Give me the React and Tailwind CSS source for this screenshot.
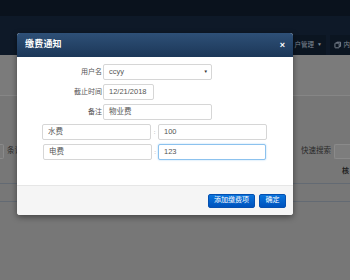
import React from "react";

const font = { fontFamily: '"Liberation Sans", "Noto Sans CJK SC", sans-serif' };

function Field({ w, children, focus, extra = "" }) {
  return (
    <div
      className={`h-[16px] rounded-[2px] border bg-white flex items-center pl-[5px] text-[7.5px] text-[#555] ${
        focus ? "border-[#8cc2ee] shadow-[0_0_2px_#a9d3f5]" : "border-[#d6d6d6]"
      } ${extra}`}
      style={{ width: w }}
    >
      {children}
    </div>
  );
}

export default function App() {
  return (
    <div className="relative w-[350px] h-[280px] overflow-hidden bg-[#777777]" style={font}>
      {/* underlying page (dimmed) */}
      <div className="h-[16px] bg-[#0a121d]" />
      <div className="h-[39px] bg-[#0e1928] flex items-end justify-end">
        <div className="h-[20px] w-[36px] bg-[#0b1521] flex items-center justify-end pr-[4px] gap-[3px] text-[6.5px] text-[#7f8893]">
          <span>户管理</span>
          <span className="text-[5px]">▼</span>
        </div>
        <div className="w-[4px]" />
        <div className="h-[20px] w-[20px] bg-[#0b1521] flex items-center gap-[2px] pl-[4px] text-[6.5px] text-[#7f8893]">
          <svg width="8" height="8" viewBox="0 0 8 8" fill="none" stroke="#7f8893" strokeWidth="1">
            <rect x="1" y="2" width="4.5" height="5" rx="0.5" />
            <path d="M3 2 V1 H7 V5.5 H5.5" />
          </svg>
          <span>内</span>
        </div>
      </div>
      <div className="h-[41px] bg-[#7b7b7b] border-b border-[#868686]" />
      <div className="h-[47px]" />
      <div className="flex items-center justify-between h-[16px]">
        <div className="flex items-center gap-[3px]">
          <div className="w-[4px] h-[15px] border border-[#8a8a8a] border-l-0 rounded-r-[2px] bg-[#7a7a7a]" />
          <span className="text-[7.5px] text-[#2a2a2a]">条记</span>
        </div>
        <div className="flex items-center gap-[3px]">
          <span className="text-[7.5px] text-[#2a2a2a]">快速搜索</span>
          <div className="w-[16px] h-[15px] border border-[#8a8a8a] border-r-0 rounded-l-[2px] bg-[#7d7d7d]" />
        </div>
      </div>
      <div className="flex justify-end h-[24px] items-center pr-[1px]">
        <span className="text-[7px] font-bold text-[#222]">核</span>
      </div>
      <div className="border-t border-[#636a73] h-[18px]" />
      <div className="border-t border-[#636a73]" />

      {/* modal */}
      <div className="absolute left-[17px] top-[33px] w-[276px] rounded-[3px] overflow-hidden bg-white shadow-[0_2px_6px_rgba(0,0,0,0.45)]">
        <div className="h-[24px] bg-gradient-to-b from-[#2e5077] to-[#1c3758] flex items-center justify-between pl-[8px] pr-[8px]">
          <span className="text-[9px] font-bold text-white tracking-[0.2px]">缴费通知</span>
          <span className="text-[9px] font-bold text-white leading-none">×</span>
        </div>
        <div className="h-[128px] pt-[7px] flex flex-col gap-[4px]">
          <div className="flex items-center">
            <div className="w-[86px] pr-[1px] text-right text-[7px] text-[#555]">用户名</div>
            <Field w={109}>
              <span className="flex-1">ccyy</span>
              <span className="text-[4.5px] text-[#333] mr-[3px]">▼</span>
            </Field>
          </div>
          <div className="flex items-center">
            <div className="w-[86px] pr-[1px] text-right text-[7px] text-[#555]">截止时间</div>
            <Field w={51}>12/21/2018</Field>
          </div>
          <div className="flex items-center">
            <div className="w-[86px] pr-[1px] text-right text-[7px] text-[#555]">备注</div>
            <Field w={109}>物业费</Field>
          </div>
          <div className="flex items-center pl-[25px]">
            <Field w={109}>水费</Field>
            <div className="w-[7px] text-center text-[6px] text-[#777]">:</div>
            <Field w={109}>100</Field>
          </div>
          <div className="flex items-center pl-[26px]">
            <Field w={109}>电费</Field>
            <div className="w-[6px] text-center text-[6px] text-[#777]">:</div>
            <Field w={108} focus>123</Field>
          </div>
        </div>
        <div className="h-[30px] bg-[#f5f5f5] border-t border-[#e6e6e6] flex items-center justify-end gap-[4px] pr-[7px]">
          <div className="h-[14px] w-[47px] rounded-[2px] bg-gradient-to-b from-[#0a74dd] to-[#0052bd] border border-[#0550b0] flex items-center justify-center text-[7px] text-white">
            添加缴费项
          </div>
          <div className="h-[14px] w-[27px] rounded-[2px] bg-gradient-to-b from-[#0a74dd] to-[#0052bd] border border-[#0550b0] flex items-center justify-center text-[7px] text-white">
            确定
          </div>
        </div>
      </div>
    </div>
  );
}
